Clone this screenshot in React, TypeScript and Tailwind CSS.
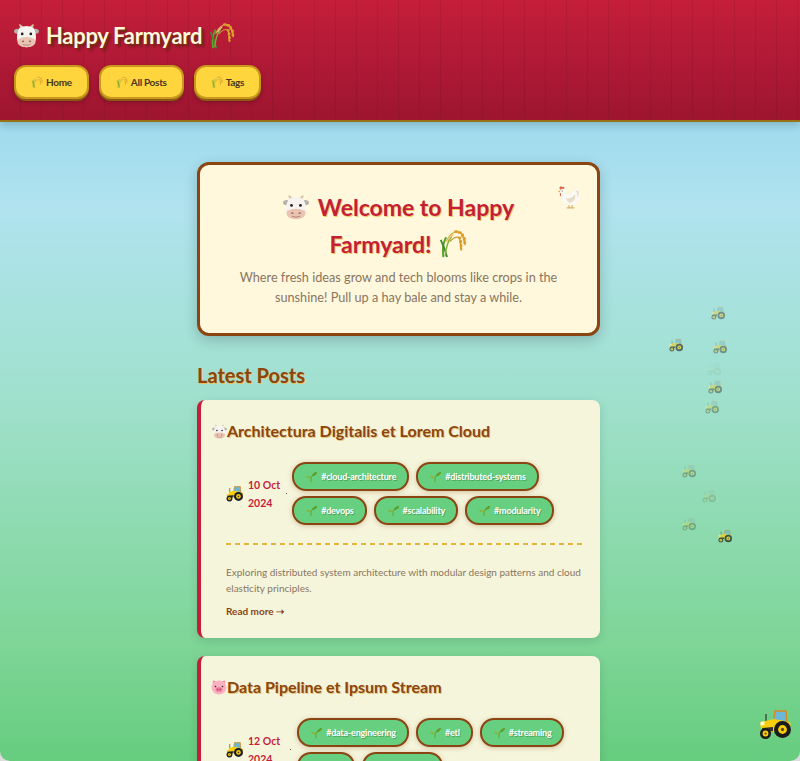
import type { CSSProperties } from "react";

const hand = '"Lato","Noto Sans",sans-serif';
const body = '"Lato","Noto Sans",sans-serif';

type Ic = { s: number; className?: string; style?: CSSProperties };

function Cow({ s, className }: Ic) {
  return (
    <svg width={s} height={s} viewBox="0 0 32 32" className={className}>
      <path d="M8 6 Q6 3 7 1 Q10 3 12 5Z M24 6 Q26 3 25 1 Q22 3 20 5Z" fill="#d8c4a0" />
      <ellipse cx="5" cy="10.5" rx="5" ry="3.2" fill="#b5b0ac" />
      <ellipse cx="27" cy="10.5" rx="5" ry="3.2" fill="#b5b0ac" />
      <path d="M7 6 Q16 1.5 25 6 Q29 13 28 21 Q26 31 16 31 Q6 31 4 21 Q3 13 7 6Z" fill="#f6f3f0" />
      <path d="M4.5 21 Q16 15 27.5 21 Q29 31 16 31 Q3 31 4.5 21Z" fill="#e9c4b2" />
      <circle cx="10.5" cy="14" r="1.7" fill="#1f1f1f" />
      <circle cx="21.5" cy="14" r="1.7" fill="#1f1f1f" />
      <ellipse cx="11.5" cy="23.5" rx="1.5" ry="1.1" fill="#96685c" />
      <ellipse cx="20.5" cy="23.5" rx="1.5" ry="1.1" fill="#96685c" />
      <path d="M11 27.5 Q16 29.5 21 27.5" stroke="#96685c" strokeWidth=".8" fill="none" />
    </svg>
  );
}
function Rice({ s, className, style }: Ic) {
  return (
    <svg width={s} height={s} viewBox="0 0 32 32" className={className} style={style}>
      <path d="M6 31 Q4 18 9 9" stroke="#5fa02e" strokeWidth="2.2" fill="none" />
      <path d="M10 31 Q7 20 3 12" stroke="#3f8a2c" strokeWidth="2" fill="none" />
      <path d="M8 30 Q9 16 15 8" stroke="#7fae3a" strokeWidth="1.6" fill="none" />
      <path d="M9 14 Q14 3 22 3 Q28 4 30 18" stroke="#d9b04a" strokeWidth="1.4" fill="none" />
      <path d="M13 14 Q18 8 23 9 Q25 12 25 22" stroke="#c99a3a" strokeWidth="1.4" fill="none" />
      <g fill="#dd9f2a">
        <ellipse cx="20" cy="3" rx="2.4" ry="1.5" />
        <ellipse cx="24" cy="4" rx="2.4" ry="1.6" />
        <ellipse cx="27" cy="7" rx="1.7" ry="2.4" />
        <ellipse cx="29" cy="11" rx="1.7" ry="2.4" />
        <ellipse cx="29.5" cy="15" rx="1.6" ry="2.3" />
        <ellipse cx="24" cy="10" rx="1.8" ry="1.5" />
        <ellipse cx="25" cy="14" rx="1.7" ry="2.2" />
        <ellipse cx="25.5" cy="18.5" rx="1.6" ry="2.2" />
        <ellipse cx="25.5" cy="22" rx="1.3" ry="1.9" />
      </g>
      <path d="M11 12 Q14 7 17 6" stroke="#e8c878" strokeWidth="1.6" fill="none" />
    </svg>
  );
}
function Chicken({ s, className }: Ic) {
  return (
    <svg width={s} height={s} viewBox="0 0 32 32" className={className}>
      <path d="M16 26 L16 30 M20 26 L20 30 M13 30.5 L18 30.5 M18 30.5 L23 30.5" stroke="#d4a860" strokeWidth="1.4" />
      <path d="M3 4 Q5 0 7 3 Q9 0 10 5 L5 7Z" fill="#d9583f" />
      <path d="M1 8.5 L4 7 L4 10Z" fill="#e6a63c" />
      <path d="M4 10.5 Q3 15 5.5 15 L7 10.5Z" fill="#d9583f" />
      <path d="M4 8 Q5 4.5 8.5 5 Q11 6.5 11 10 Q11.5 13 15 13 Q20 11 23 7 Q27 3 30 7 Q32.5 14 29 20 Q25 27 17 27 Q9 26 6.5 18 Q5 13 5 10Z" fill="#fbfaf6" />
      <path d="M12 17 Q18 20 24 12 Q26 20 18 24 Q13 23 12 17Z" fill="#e6dcc6" />
      <path d="M25 8 Q28 6 29 9 Q30 14 27 18 Q28 12 25 8Z" fill="#e6dcc6" />
      <circle cx="6.8" cy="8" r=".8" fill="#333" />
    </svg>
  );
}
function Pig({ s, className }: Ic) {
  return (
    <svg width={s} height={s} viewBox="0 0 32 32" className={className}>
      <path d="M4 3 Q11 3 11 9 L5 12 Q2 8 4 3Z M28 3 Q21 3 21 9 L27 12 Q30 8 28 3Z" fill="#f08fa6" />
      <ellipse cx="16" cy="17" rx="15" ry="14" fill="#fbb2c2" />
      <ellipse cx="16" cy="21" rx="7" ry="5" fill="#f07f9c" />
      <ellipse cx="13.5" cy="21" rx="1.2" ry="1.8" fill="#a83f5c" />
      <ellipse cx="18.5" cy="21" rx="1.2" ry="1.8" fill="#a83f5c" />
      <circle cx="9" cy="15" r="1.6" fill="#222" />
      <circle cx="23" cy="15" r="1.6" fill="#222" />
    </svg>
  );
}
function Tractor({ s, className, style }: Ic) {
  return (
    <svg width={s} height={s} viewBox="0 0 32 32" className={className} style={style}>
      <path d="M7 6 L7 14" stroke="#333" strokeWidth="1.2" />
      <path d="M14 15 L16 3 L27 3 L28 15Z" fill="#69b8d6" stroke="#d98a1e" strokeWidth="1.4" />
      <path d="M1.5 14 L15 11 L31 14 Q32 17 31 20 L14 24 L3 25 Q1 19 1.5 14Z" fill="#f9cf0c" />
      <path d="M1.5 14 L5.5 13.2 L5.5 17 L1.5 17.5Z" fill="#fff8d0" />
      <path d="M3 20 L14 19 L14 23 L4 25Z" fill="#333" />
      <circle cx="23.5" cy="21.5" r="8.5" fill="#1c1c1c" />
      <circle cx="23.5" cy="21.5" r="4.4" fill="#f9cf0c" />
      <circle cx="23.5" cy="21.5" r="1.7" fill="#5a4a10" />
      <circle cx="6.5" cy="25.5" r="5.5" fill="#1c1c1c" />
      <circle cx="6.5" cy="25.5" r="2.9" fill="#f9cf0c" />
      <circle cx="6.5" cy="25.5" r="1.1" fill="#5a4a10" />
    </svg>
  );
}
function Seedling({ s, className }: Ic) {
  return (
    <svg width={s} height={s} viewBox="0 0 16 16" className={className}>
      <path d="M7.5 15 Q7 11 8 7.5" stroke="#6aa82e" strokeWidth="1.4" fill="none" />
      <path d="M8 8 Q9 3 15 2 Q14.5 7 8 8Z" fill="#5f9e2a" />
      <path d="M7.5 10 Q5 6 1 7.5 Q3 11 7.5 10Z" fill="#8ab53a" />
    </svg>
  );
}

function Tag({ t }: { t: string }) {
  return (
    <span className="inline-flex h-[29px] items-center gap-[3px] rounded-[14px] border-2 border-[#8b4513] bg-[#66cf80] px-[11px] text-[9px] font-bold tracking-[-0.2px] text-white shadow-[0_1px_5px_rgba(139,69,19,0.3)]" style={{ fontFamily: hand }}>
      <Seedling s={13} />
      <span className="[text-shadow:1px_1px_0_rgba(60,120,60,0.5)]">{t}</span>
    </span>
  );
}

function Post({ icon, title, date, tags, gap, desc }: { icon: "cow" | "pig"; title: string; date: [string, string]; tags: string[]; gap: string; desc?: boolean }) {
  return (
    <article className="rounded-lg border-l-4 border-[#c41e3a] bg-[#f5f5dc] pb-[19px] pl-[25px] pr-[18px] pt-[20px] shadow-[0_3px_10px_rgba(0,0,0,0.12)]">
      <h3 className="flex h-[22px] items-center text-[16px] font-bold leading-[22px] text-[#8b4513] [text-shadow:1px_1px_0_#e8c878]" style={{ fontFamily: hand }}>
        {icon === "cow" ? <Cow s={15} className="-ml-[14px] shrink-0" /> : <Pig s={16} className="-ml-[15px] shrink-0" />}
        {title}
      </h3>
      <div className="mt-[20px] flex items-center">
        <Tractor s={17} className="shrink-0" />
        <span className="ml-[5px] shrink-0 whitespace-nowrap text-[10.5px] font-bold leading-[18px] text-[#c41e3a]">
          {date[0]}
          <br />
          {date[1]}
        </span>
        <span className={`h-px w-px shrink-0 bg-[#6b5a48] ${gap}`} />
        <div className="flex flex-wrap gap-x-[7px] gap-y-[5px]">
          {tags.map((t) => <Tag key={t} t={t} />)}
        </div>
      </div>
      {desc && (
        <>
          <div className="mt-[18px] h-[2px] bg-[repeating-linear-gradient(90deg,#e4b43c_0,#e4b43c_5px,transparent_5px,transparent_9px)]" />
          <p className="mt-[19px] text-[10px] leading-[16px] text-[#8a7560]">Exploring distributed system architecture with modular design patterns and cloud elasticity principles.</p>
          <p className="mt-[7px] text-[10px] font-bold leading-[16px] text-[#8b4513]">Read more ➝</p>
        </>
      )}
    </article>
  );
}

const trail: { x: number; y: number; o: string }[] = [
  { x: 711, y: 306, o: "opacity-40" },
  { x: 669, y: 338, o: "opacity-60" },
  { x: 713, y: 340, o: "opacity-40" },
  { x: 707, y: 362, o: "opacity-5" },
  { x: 708, y: 380, o: "opacity-40" },
  { x: 705, y: 400, o: "opacity-30" },
  { x: 682, y: 464, o: "opacity-30" },
  { x: 702, y: 489, o: "opacity-15" },
  { x: 682, y: 517, o: "opacity-25" },
  { x: 718, y: 529, o: "opacity-70" },
];

export default function App() {
  return (
    <div className="h-[761px] overflow-hidden bg-[#dcdcdc]" style={{ fontFamily: body }}>
      <div className="relative h-[761px] overflow-hidden rounded-b-[10px] bg-[linear-gradient(180deg,#87ceeb_0%,#b0e3ef_27%,#9fe0cc_53%,#7dd596_85%,#66cc7e_100%)]">
        {trail.map((t) => (
          <Tractor key={t.x + "-" + t.y} s={14} className={`absolute ${t.o}`} style={{ left: t.x, top: t.y }} />
        ))}
        <Tractor s={32} className="absolute left-[759px] top-[708px]" />
        <header className="relative h-[122px] border-b-2 border-[#9a7414] bg-[repeating-linear-gradient(90deg,transparent_0,transparent_20px,rgba(0,0,0,0.07)_20px,rgba(0,0,0,0.07)_21px),linear-gradient(180deg,#c41e3a,#9d1530)] px-[14px] pt-[21px] shadow-[0_3px_8px_rgba(0,0,0,0.18)]">
          <h1 className="flex h-[28px] items-center text-[22px] font-bold tracking-[-0.3px] text-[#fff8dc] [text-shadow:2px_2px_0_#7a2a10,3px_3px_3px_rgba(0,0,0,0.3)]" style={{ fontFamily: hand }}>
            <Cow s={25} className="mr-[7px]" />
            Happy Farmyard
            <Rice s={27} className="ml-[6px]" />
          </h1>
          <nav className="mt-[16px] flex gap-[10px]">
            {["Home", "All Posts", "Tags"].map((n) => (
              <a key={n} className="flex h-[34px] items-center gap-[3px] rounded-xl border-2 border-[#c9961e] bg-[#ffd53d] px-[15px] text-[10px] font-bold tracking-[-0.3px] text-[#4a3520] shadow-[0_2px_0_#8b5a13,0_3px_5px_rgba(0,0,0,0.25)]" style={{ fontFamily: hand }}>
                <Rice s={12} className="opacity-75" />
                {n}
              </a>
            ))}
          </nav>
        </header>
        <main className="ml-[197px] mt-[40px] w-[403px]">
          <section className="relative h-[174px] rounded-xl border-[3px] border-[#8b4513] bg-[#fff8dc] px-6 pt-[24px] text-center shadow-[0_4px_14px_rgba(0,0,0,0.2)]">
            <Chicken s={24} className="absolute right-[16px] top-[20px] opacity-90" />
            <h2 className="text-[23px] font-bold leading-[37px] text-[#c41e3a] [text-shadow:1px_1px_0_#f0c860]" style={{ fontFamily: hand }}>
              <Cow s={26} className="mr-[9px] inline-block align-[-4px]" />
              Welcome to Happy
              <br />
              Farmyard!
              <Rice s={29} className="ml-[7px] inline-block align-[-5px]" />
            </h2>
            <p className="mt-[4px] text-[12.7px] leading-[20px] text-[#8a7560]">Where fresh ideas grow and tech blooms like crops in the sunshine! Pull up a hay bale and stay a while.</p>
          </section>
          <h2 className="mt-[25px] h-[28px] text-[20px] font-bold leading-[28px] text-[#8b4513] [text-shadow:1px_1px_0_#e8c060]" style={{ fontFamily: hand }}>Latest Posts</h2>
          <div className="mt-[11px] flex flex-col gap-[18px]">
            <Post icon="cow" title="Architectura Digitalis et Lorem Cloud" date={["10 Oct", "2024"]} gap="ml-[6px] mr-[5px]" desc tags={["#cloud-architecture", "#distributed-systems", "#devops", "#scalability", "#modularity"]} />
            <Post icon="pig" title="Data Pipeline et Ipsum Stream" date={["12 Oct", "2024"]} gap="ml-[10px] mr-[6px]" tags={["#data-engineering", "#etl", "#streaming", "#sql", "#pipelines"]} />
          </div>
        </main>
      </div>
    </div>
  );
}
